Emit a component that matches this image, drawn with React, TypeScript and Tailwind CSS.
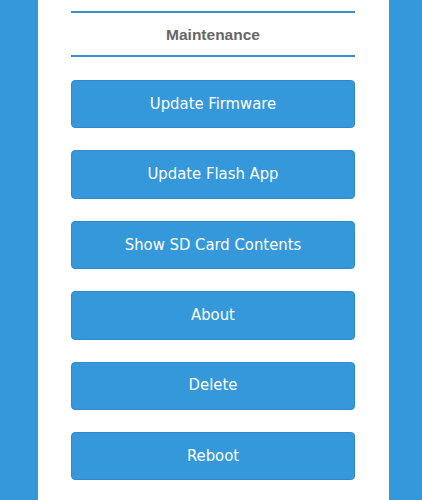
const actions = [
  'Update Firmware',
  'Update Flash App',
  'Show SD Card Contents',
  'About',
  'Delete',
  'Reboot',
];

export default function App() {
  return (
    <div className="flex h-[500px] w-[422px] justify-start overflow-hidden bg-[#3498db]">
      <div className="ml-[38px] flex w-[351px] flex-col bg-white px-[33px] pt-[11px]">
        <div className="w-[284px] border-y-2 border-[#3b8fcf] pt-[11px] pb-[9px] text-center">
          <h2 className="font-['Liberation_Sans',Arial,sans-serif] text-[15.5px] font-bold leading-[22px] text-[#666666]">
            Maintenance
          </h2>
        </div>
        <div className="mt-[23px] flex w-[284px] flex-col gap-[22px]">
          {actions.map((label) => (
            <button
              key={label}
              type="button"
              className="h-[48.4px] rounded-[4px] border border-[#2f8acb] bg-[#3498db] font-['DejaVu_Sans_Condensed','DejaVu_Sans',sans-serif] text-[16.5px] text-white"
            >
              {label}
            </button>
          ))}
        </div>
      </div>
    </div>
  );
}
